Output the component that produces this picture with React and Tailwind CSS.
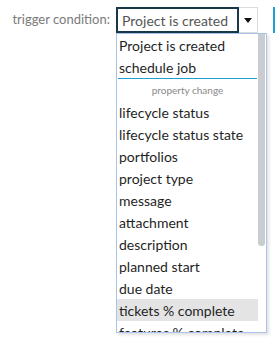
import React from 'react';

const items = [
  'lifecycle status',
  'lifecycle status state',
  'portfolios',
  'project type',
  'message',
  'attachment',
  'description',
  'planned start',
  'due date',
  'tickets % complete',
  'features % complete',
];

const Option = ({ label, active }) => (
  <div
    className={`h-[22px] pl-[2px] flex items-center whitespace-nowrap text-[14px] text-[#1f1f1f] ${
      active ? 'bg-[#e4e4e4]' : ''
    }`}
  >
    {label}
  </div>
);

export default function App() {
  return (
    <div className="w-[275px] h-[346px] bg-white relative overflow-hidden font-['Lato',sans-serif]">
      <div className="flex items-center pt-[7px]">
        <span className="w-[116px] shrink-0 pr-[6px] text-right text-[13px] text-[#7a7a7a] whitespace-nowrap">
          trigger condition:
        </span>

        <div className="relative flex shrink-0">
          <div className="w-[123px] h-[26px] border-2 border-[#183847] pl-[4px] flex items-center text-[14px] text-[#555] whitespace-nowrap">
            Project is created
          </div>
          <div className="w-[19px] h-[26px] border border-l-0 border-[#dcdcdc] flex items-center justify-center">
            <svg width="8" height="5" viewBox="0 0 8 5">
              <path d="M0 0h8L4 5z" fill="#111" />
            </svg>
          </div>

          {/* dropdown menu */}
          <div className="absolute top-[26px] left-0 w-[151px] h-[300px] bg-white border border-[#a9c4ea] shadow-[2px_2px_3px_rgba(0,0,0,0.12)] flex overflow-hidden z-10">
            <div className="flex-1 overflow-hidden">
              <Option label="Project is created" />
              <Option label="schedule job" />
              <div className="mx-[1px] h-[1px] bg-[#1ba1d6]" />
              <div className="h-[22px] flex items-center justify-center text-[10px] text-[#8a8a8a]">property change</div>
              {items.map((label) => (
                <Option key={label} label={label} active={label === 'tickets % complete'} />
              ))}
            </div>
            <div className="w-[8px] pr-[1px]">
              <div className="w-[7px] h-[212px] bg-[#c9cdd1] rounded-b-[3px]" />
            </div>
          </div>
        </div>

        <div className="ml-auto w-[2px] h-[26px] bg-[#1ba1d6]" />
      </div>
    </div>
  );
}
